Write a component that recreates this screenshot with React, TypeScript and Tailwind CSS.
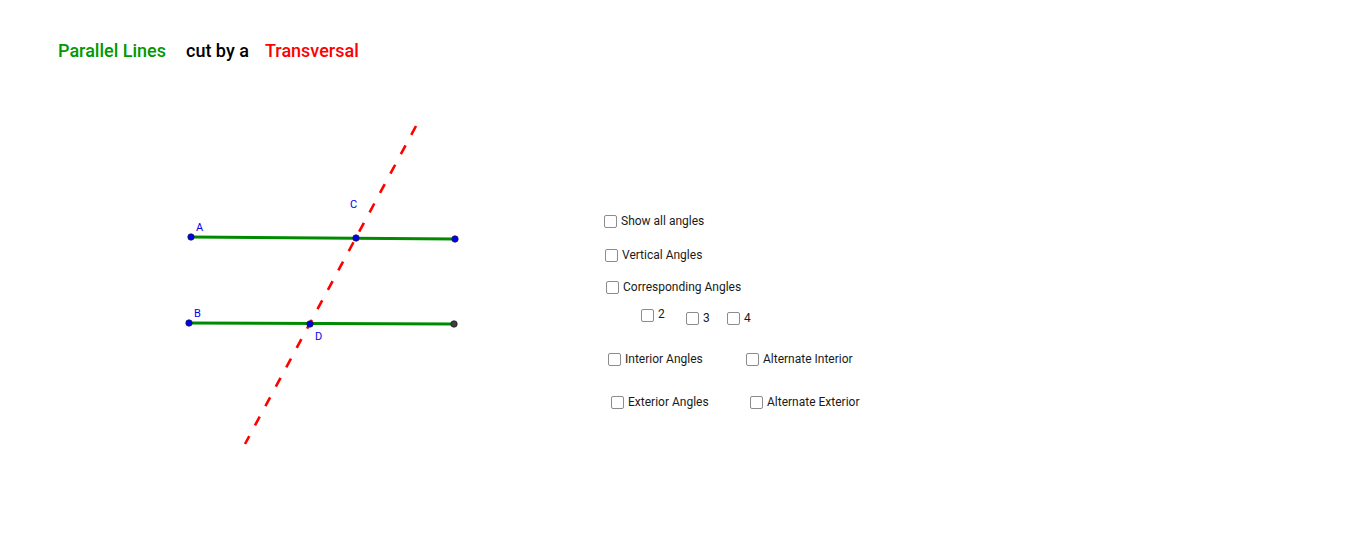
import React from "react";

type Pt = { x: number; y: number };

const pts: Record<string, Pt> = {
  A: { x: 191, y: 237 },
  A2: { x: 455, y: 239 },
  C: { x: 356, y: 238 },
  B: { x: 189, y: 323 },
  B2: { x: 454, y: 324 },
  D: { x: 310, y: 324 },
};

const Box = ({ className = "" }: { className?: string }) => (
  <span
    className={`inline-block w-[13px] h-[13px] shrink-0 border border-[#8c8c8c] rounded-[2px] bg-white ${className}`}
  />
);

const Check = ({ label, className = "" }: { label: string; className?: string }) => (
  <label className={`flex items-center ${className}`}>
    <Box />
    <span className="ml-[4px] text-[12px] leading-[13px] text-[#1a1a1a]">{label}</span>
  </label>
);

const Diagram = () => (
  <svg width="560" height="360" viewBox="0 100 560 360" className="shrink-0">
    {/* the two parallel segments */}
    <line x1={pts.A.x} y1={pts.A.y} x2={pts.A2.x} y2={pts.A2.y} stroke="#008a00" strokeWidth="3" />
    <line x1={pts.B.x} y1={pts.B.y} x2={pts.B2.x} y2={pts.B2.y} stroke="#008a00" strokeWidth="3" />
    {/* transversal */}
    <line x1="416" y1="126" x2="245" y2="444" stroke="#ff0000" strokeWidth="2.6" strokeDasharray="10 12" />
    {[pts.A, pts.A2, pts.C, pts.B, pts.D].map((p, i) => (
      <circle key={i} cx={p.x} cy={p.y} r="3.2" fill="#0000ee" stroke="#1a1a4a" strokeWidth="0.8" />
    ))}
    <circle cx={pts.B2.x} cy={pts.B2.y} r="3.2" fill="#404040" stroke="#1a1a1a" strokeWidth="0.8" />
    <g fill="#0000ee" fontSize="11" fontFamily="Roboto, 'Liberation Sans', sans-serif">
      <text x="196" y="231">A</text>
      <text x="350" y="208">C</text>
      <text x="194" y="317">B</text>
      <text x="315" y="340">D</text>
    </g>
  </svg>
);

export default function App() {
  return (
    <div className="w-[1366px] h-[558px] bg-white overflow-hidden font-['Roboto','Liberation_Sans',sans-serif]">
      <header className="h-[100px] pt-[41px] pl-[58px] flex text-[18px] leading-[20px] font-medium">
        <span className="w-[128px] text-[#009900]">Parallel Lines</span>
        <span className="w-[79px] text-black">cut by a</span>
        <span className="text-[#ff0000]">Transversal</span>
      </header>

      <div className="flex">
        <Diagram />
        <div className="ml-[44px] flex flex-col">
          <Check label="Show all angles" className="mt-[115px]" />
          <Check label="Vertical Angles" className="mt-[21px] ml-[1px]" />
          <Check label="Corresponding Angles" className="mt-[19px] ml-[2px]" />
          <div className="mt-[15px] ml-[37px] flex items-start">
            <label className="w-[45px] flex items-center">
              <Box />
              <span className="ml-[4px] -mt-[2px] text-[12px] leading-[13px] text-[#1a1a1a]">2</span>
            </label>
            <Check label="3" className="w-[41px] mt-[3px]" />
            <Check label="4" className="mt-[3px]" />
          </div>
          <div className="mt-[28px] ml-[4px] flex">
            <Check label="Interior Angles" className="w-[138px]" />
            <Check label="Alternate Interior" />
          </div>
          <div className="mt-[30px] ml-[7px] flex">
            <Check label="Exterior Angles" className="w-[139px]" />
            <Check label="Alternate Exterior" />
          </div>
        </div>
      </div>
    </div>
  );
}
